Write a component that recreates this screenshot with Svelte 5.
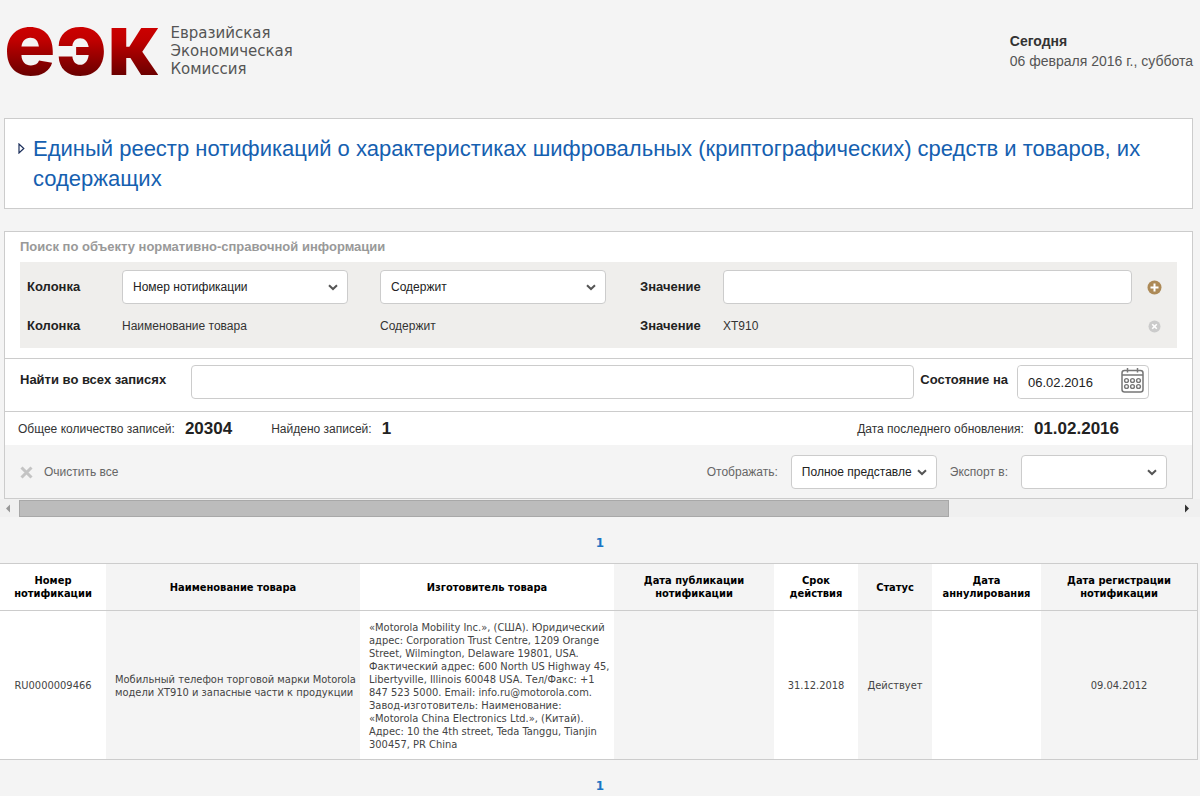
<script>
  let column = $state('Номер нотификации');
  let condition = $state('Содержит');
  let value = $state('');
  let query = $state('');
  let date = $state('06.02.2016');
  let view = $state('Полное представле');
  let format = $state('');

  const columns = [
    { title: 'Номер нотификации', width: 106 },
    { title: 'Наименование товара', width: 254 },
    { title: 'Изготовитель товара', width: 254 },
    { title: 'Дата публикации нотификации', width: 160 },
    { title: 'Срок действия', width: 84 },
    { title: 'Статус', width: 74 },
    { title: 'Дата аннулирования', width: 109 },
    { title: 'Дата регистрации нотификации', width: 156 }
  ];

  const rows = [
    [
      'RU0000009466',
      'Мобильный телефон торговой марки Motorola модели XT910 и запасные части к продукции',
      '«Motorola Mobility Inc.», (США). Юридический адрес: Corporation Trust Centre, 1209 Orange Street, Wilmington, Delaware 19801, USA. Фактический адрес: 600 North US Highway 45, Libertyville, Illinois 60048 USA. Тел/Факс: +1 847 523 5000. Email: info.ru@motorola.com. Завод-изготовитель: Наименование: «Motorola China Electronics Ltd.», (Китай). Адрес: 10 the 4th street, Teda Tanggu, Tianjin 300457, PR China',
      '',
      '31.12.2018',
      'Действует',
      '',
      '09.04.2012'
    ]
  ];
</script>

{#snippet chevron()}
  <svg class="chevron" width="10" height="7" viewBox="0 0 10 7" aria-hidden="true">
    <path d="M1 1.2 5 5 9 1.2" fill="none" stroke="#555" stroke-width="2" />
  </svg>
{/snippet}

<header>
  <a class="logo" href="#home">
    <span class="mark">еэк</span>
    <span class="name">Евразийская<br />Экономическая<br />Комиссия</span>
  </a>
  <div class="today">
    <strong>Сегодня</strong>
    <span>06 февраля 2016 г., суббота</span>
  </div>
</header>

<main>
  <section class="panel title">
    <svg width="7" height="11" viewBox="0 0 7 11" aria-hidden="true">
      <path d="M1 1v9l4.800-4.500z" fill="#fff" stroke="#1c2f5c" stroke-width="1.200" />
    </svg>
    <h1>Единый реестр нотификаций о характеристиках шифровальных (криптографических) средств и товаров, их содержащих</h1>
  </section>

  <section class="panel">
    <div class="search">
      <h2>Поиск по объекту нормативно-справочной информации</h2>
      <div class="filters">
        <label for="column">Колонка</label>
        <span class="select">
          <select id="column" bind:value={column}><option>Номер нотификации</option></select>
          {@render chevron()}
        </span>
        <span class="select">
          <select aria-label="Условие" bind:value={condition}><option>Содержит</option></select>
          {@render chevron()}
        </span>
        <label for="value">Значение</label>
        <input id="value" type="text" bind:value />
        <button class="icon" aria-label="Добавить">
          <svg width="15" height="15" viewBox="0 0 15 15" aria-hidden="true">
            <circle cx="7.500" cy="7.500" r="7" fill="#ad8a57" />
            <path d="M7.500 3.500v8M3.500 7.500h8" stroke="#fff" stroke-width="2" />
          </svg>
        </button>

        <b>Колонка</b>
        <span>Наименование товара</span>
        <span>Содержит</span>
        <b>Значение</b>
        <span>XT910</span>
        <button class="icon" aria-label="Удалить">
          <svg width="13" height="13" viewBox="0 0 13 13" aria-hidden="true">
            <circle cx="6.500" cy="6.500" r="6" fill="#cbcbcb" />
            <path d="m4.200 4.200 4.600 4.600M8.800 4.200 4.200 8.800" stroke="#fff" stroke-width="1.600" />
          </svg>
        </button>
      </div>
    </div>

    <div class="all">
      <label for="query">Найти во всех записях</label>
      <input id="query" type="text" bind:value={query} />
      <label for="date">Состояние на</label>
      <span class="date">
        <input id="date" type="text" bind:value={date} />
        <button class="icon" aria-label="Выбрать дату">
          <svg width="23" height="25" viewBox="0 0 23 25" fill="none" stroke="#777" aria-hidden="true">
            <rect x="1" y="2.500" width="21" height="21.500" rx="2.500" stroke-width="1.500" />
            <path d="M1 7h21" stroke-width="1.500" />
            <path d="M6.500 0v4.500M16.500 0v4.500" stroke-width="1.500" />
            {#each [12.5, 18.5] as cy}
              {#each [5.5, 11.5, 17.5] as cx}
                <circle {cx} {cy} r="1.900" stroke-width="1.400" />
              {/each}
            {/each}
          </svg>
        </button>
      </span>
    </div>

    <div class="stats">
      <span>Общее количество записей: <strong>20304</strong></span>
      <span>Найдено записей: <strong>1</strong></span>
      <span class="updated">Дата последнего обновления: <strong>01.02.2016</strong></span>
    </div>

    <div class="tools">
      <button class="clear">
        <svg width="13" height="13" viewBox="0 0 13 13" aria-hidden="true">
          <path d="m1.500 1.500 10 10M11.500 1.500l-10 10" stroke="#c4c4c4" stroke-width="3" />
        </svg>
        Очистить все
      </button>
      <label for="view">Отображать:</label>
      <span class="select">
        <select id="view" bind:value={view}><option>Полное представле</option></select>
        {@render chevron()}
      </span>
      <label for="format">Экспорт в:</label>
      <span class="select">
        <select id="format" bind:value={format}><option></option></select>
        {@render chevron()}
      </span>
    </div>
  </section>
</main>

<div class="scroll">
  <svg width="19" height="17" viewBox="0 0 19 17" aria-hidden="true"><path d="M10 4.500v8L6 8.500z" fill="#999" /></svg>
  <div class="track"><div class="thumb"></div></div>
  <svg width="19" height="17" viewBox="0 0 19 17" aria-hidden="true"><path d="M4 4.500v8l4-4z" fill="#333" /></svg>
</div>

<nav><a href="#page-1">1</a></nav>

<table>
  <colgroup>
    {#each columns as c}<col style="width: {c.width}px" />{/each}
  </colgroup>
  <thead>
    <tr>{#each columns as c}<th scope="col">{c.title}</th>{/each}</tr>
  </thead>
  <tbody>
    {#each rows as row}
      <tr>{#each row as cell}<td>{cell}</td>{/each}</tr>
    {/each}
  </tbody>
</table>

<nav><a href="#page-1">1</a></nav>

<style>
  :global(body) {
    background: #f4f4f4;
    color: #333;
    font: 12px/20px 'Liberation Sans', Arial, sans-serif;
  }
  a { text-decoration: none; }
  header {
    display: flex;
    justify-content: space-between;
    height: 118px;
    padding: 0 7px 0 4px;
    box-sizing: border-box;
  }
  .logo { display: flex; gap: 12px; }
  .mark {
    font-family: Inter, 'Liberation Sans', sans-serif;
    font-size: 86px;
    font-weight: 800;
    line-height: 88px;
    background: linear-gradient(#d00000 20%, #c00000 34%, #6a0000 64%);
    background-clip: text;
    color: transparent;
  }
  .name {
    padding-top: 24px;
    color: #555;
    font: 15px/18px 'DejaVu Sans', Verdana, sans-serif;
  }
  .today {
    display: flex;
    flex-direction: column;
    padding-top: 31px;
    color: #555;
    font-size: 14px;
  }
  .today strong { color: #333; }
  main { padding: 0 7px 0 4px; }
  .panel { border: 1px solid #ccc; background: #fff; }
  .title {
    display: flex;
    align-items: flex-start;
    gap: 8px;
    margin-bottom: 22px;
    padding: 15px 13px 14px;
  }
  .title svg { flex: none; margin-top: 9px; }
  h1 {
    margin: 0;
    color: #1560b0;
    font-size: 22px;
    font-weight: normal;
    line-height: 30px;
  }
  .search { padding: 5px 15px 10px; }
  h2 { margin: 0 0 5px; color: #999; font-size: 13px; line-height: 20px; }
  label, b { color: #222; font-size: 13px; font-weight: bold; }
  .filters {
    display: grid;
    grid-template-columns: 95px 226px 32px 226px 34px 83px 1fr 44px;
    grid-template-rows: 34px 32px;
    row-gap: 6px;
    align-items: center;
    padding: 8px 1px 6px 7px;
    background: #efeeec;
  }
  .filters > :nth-child(6n + 3) { grid-column: 4; }
  .filters > :nth-child(6n + 4) { grid-column: 6; }
  input, .select, .date {
    box-sizing: border-box;
    height: 34px;
    border: 1px solid #ccc;
    border-radius: 4px;
    background: #fff;
  }
  input, select {
    min-width: 0;
    padding: 0 10px;
    color: #222;
    font: 13px 'Liberation Sans', Arial, sans-serif;
  }
  .select { display: grid; align-items: center; }
  .select > :global(*) { grid-area: 1 / 1; }
  select {
    width: 100%;
    height: 32px;
    border: 0;
    background: none;
    font-size: 12px;
    appearance: none;
  }
  .chevron { justify-self: end; margin-right: 9px; pointer-events: none; }
  .icon {
    display: flex;
    padding: 0;
    border: 0;
    background: none;
  }
  .filters .icon { justify-self: center; }
  .all {
    display: flex;
    align-items: flex-start;
    gap: 6px;
    padding: 6px 43px 12px 15px;
    border-top: 1px solid #ccc;
    border-bottom: 1px solid #ccc;
  }
  .all label { margin-top: 5px; }
  .all label:first-child { width: 165px; }
  .all > input { flex: 1; }
  .date { display: flex; width: 132px; margin-left: 3px; }
  .date input { flex: 1; height: 32px; border: 0; }
  .date .icon { padding: 2px 4px; }
  .stats { display: flex; gap: 39px; padding: 7px 73px 6px 13px; }
  .stats span { display: flex; gap: 10px; }
  .stats strong { color: #222; font-size: 17px; }
  .stats .updated { margin-left: auto; }
  .tools {
    display: flex;
    align-items: center;
    gap: 13px;
    padding: 10px 25px 9px 15px;
    background: #f4f4f4;
  }
  .tools label { color: #666; font-size: 12px; font-weight: normal; }
  .tools .select { width: 146px; }
  .clear {
    display: flex;
    align-items: center;
    gap: 11px;
    margin-right: auto;
    padding: 0;
    border: 0;
    background: none;
    color: #666;
    font: 12px 'Liberation Sans', Arial, sans-serif;
  }
  .scroll { display: flex; background: #f0f0f0; padding-top: 1px; }
  .track { flex: 1; }
  .thumb { box-sizing: border-box; width: 80%; height: 17px; border: 1px solid #a8a8a8; background: #bcbcbc; }
  nav { padding: 16px 0 10px; text-align: center; }
  nav a { color: #1a75c4; font: bold 12px/20px 'DejaVu Sans', sans-serif; }
  table {
    width: calc(100% - 2px);
    border: 1px solid #ccc;
    border-left: 0;
    border-spacing: 0;
    table-layout: fixed;
    font: 11px/13px 'DejaVu Sans Condensed', 'DejaVu Sans', Tahoma, sans-serif;
  }
  th, td { padding: 9px 8px; background: #fff; text-align: center; }
  th { height: 28px; border-bottom: 1px solid #ccc; color: #000; }
  td { color: #444; }
  th:nth-child(even), td:nth-child(even) { background: #f4f4f4; }
  td:nth-child(2), td:nth-child(3) { padding: 10px 3px 8px 9px; text-align: left; }
</style>
